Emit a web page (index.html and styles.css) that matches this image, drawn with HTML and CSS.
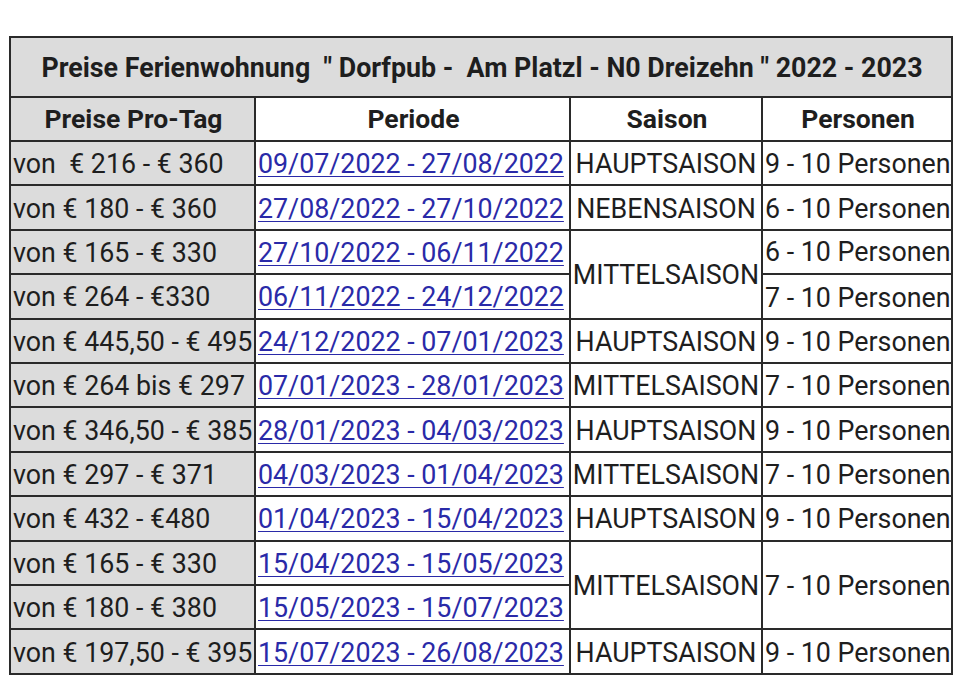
FILE: index.html
```html
<!DOCTYPE html>
<html lang="de">
<head>
<meta charset="utf-8">
<title>Preise</title>
<link rel="stylesheet" href="styles.css">
</head>
<body>
<div class="page">
<table class="prices">
  <colgroup>
    <col class="c1"><col class="c2"><col class="c3"><col class="c4">
  </colgroup>
  <tr class="title-row"><th colspan="4" class="title">Preise Ferienwohnung&nbsp; " Dorfpub -&nbsp; Am Platzl - N0 Dreizehn " 2022 - 2023</th></tr>
  <tr class="head-row">
    <th class="gray">Preise Pro-Tag</th><th>Periode</th><th>Saison</th><th>Personen</th>
  </tr>
  <tr><td class="gray">von&nbsp; € 216 - € 360</td><td><a href="#">09/07/2022 - 27/08/2022</a></td><td class="saison">HAUPTSAISON</td><td>9 - 10 Personen</td></tr>
  <tr><td class="gray">von € 180 - € 360</td><td><a href="#">27/08/2022 - 27/10/2022</a></td><td class="saison">NEBENSAISON</td><td>6 - 10 Personen</td></tr>
  <tr><td class="gray">von € 165 - € 330</td><td><a href="#">27/10/2022 - 06/11/2022</a></td><td class="saison" rowspan="2">MITTELSAISON</td><td class="top">6 - 10 Personen</td></tr>
  <tr><td class="gray">von € 264 - €330</td><td><a href="#">06/11/2022 - 24/12/2022</a></td><td class="bottom">7 - 10 Personen</td></tr>
  <tr><td class="gray">von € 445,50 - € 495</td><td><a href="#">24/12/2022 - 07/01/2023</a></td><td class="saison">HAUPTSAISON</td><td>9 - 10 Personen</td></tr>
  <tr><td class="gray">von € 264 bis € 297</td><td><a href="#">07/01/2023 - 28/01/2023</a></td><td class="saison">MITTELSAISON</td><td>7 - 10 Personen</td></tr>
  <tr><td class="gray">von € 346,50 - € 385</td><td><a href="#">28/01/2023 - 04/03/2023</a></td><td class="saison">HAUPTSAISON</td><td>9 - 10 Personen</td></tr>
  <tr><td class="gray">von € 297 - € 371</td><td><a href="#">04/03/2023 - 01/04/2023</a></td><td class="saison">MITTELSAISON</td><td>7 - 10 Personen</td></tr>
  <tr><td class="gray">von € 432 - €480</td><td><a href="#">01/04/2023 - 15/04/2023</a></td><td class="saison">HAUPTSAISON</td><td>9 - 10 Personen</td></tr>
  <tr><td class="gray">von € 165 - € 330</td><td><a href="#">15/04/2023 - 15/05/2023</a></td><td class="saison" rowspan="2">MITTELSAISON</td><td rowspan="2">7 - 10 Personen</td></tr>
  <tr><td class="gray">von € 180 - € 380</td><td><a href="#">15/05/2023 - 15/07/2023</a></td></tr>
  <tr><td class="gray">von € 197,50 - € 395</td><td><a href="#">15/07/2023 - 26/08/2023</a></td><td class="saison">HAUPTSAISON</td><td>9 - 10 Personen</td></tr>
</table>
</div>
</body>
</html>
```
FILE: styles.css
```css
html, body {
  margin: 0;
  padding: 0;
  background: #ffffff;
}
.page {
  padding: 36px 0 0 9px;
}
.prices {
  border-collapse: collapse;
  table-layout: fixed;
  width: 942px;
  font-family: Roboto, "Liberation Sans", sans-serif;
  color: #1e1e1e;
  font-size: 26.8px;
}
.c1 { width: 245px; }
.c2 { width: 315px; }
.c3 { width: 192px; }
.c4 { width: 190px; }
.prices th, .prices td {
  border: 2px solid #2a2a2a;
  padding: 0 0 0 2px;
  white-space: nowrap;
  overflow: hidden;
  line-height: 1;
}
.prices td {
  height: 39.4px;
  text-align: left;
  vertical-align: middle;
  padding-top: 3px;
}
.title-row th {
  height: 56px;
  background: #dcdcdc;
  font-size: 26.8px;
  font-weight: 700;
  text-align: center;
  padding-top: 2px;
}
.head-row th {
  height: 42px;
  font-size: 26.5px;
  font-weight: 700;
  text-align: center;
  background: #ffffff;
}
.prices .gray {
  background: #dcdcdc;
}
.prices a {
  color: #2a2aa8;
  text-decoration: underline;
  text-decoration-thickness: 1px;
  text-underline-offset: 3px;
}
.prices .saison {
  text-align: center;
  padding-left: 0;
}
.prices .top {
  padding-top: 0;
}
.prices .bottom {
  height: 37.4px;
  padding-top: 5px;
}
```
